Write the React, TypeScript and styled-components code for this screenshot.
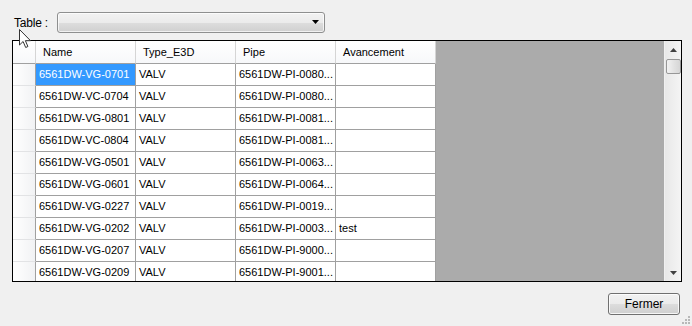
import styled, { createGlobalStyle } from "styled-components";

const GlobalStyle = createGlobalStyle`
  html, body {
    margin: 0;
    padding: 0;
    background: #f0f0f0;
  }
  * {
    box-sizing: border-box;
  }
`;

const Window = styled.div`
  position: relative;
  width: 692px;
  height: 326px;
  background: #f0f0f0;
  font-family: "Liberation Sans", Arial, sans-serif;
  font-size: 11px;
  color: #000;
  overflow: hidden;
`;

const TopBar = styled.div`
  display: flex;
  align-items: center;
  height: 21px;
  margin: 12px 0 0 14px;
`;

const Label = styled.span`
  width: 43px;
  font-size: 12px;
  letter-spacing: -0.2px;
  padding-top: 1px;
`;

const Combo = styled.div`
  display: flex;
  align-items: center;
  justify-content: flex-end;
  width: 268px;
  height: 21px;
  border: 1px solid #8e8f8f;
  border-radius: 3px;
  background: linear-gradient(#f2f2f2 0%, #ebebeb 50%, #dddddd 51%, #cfcfcf 100%);
  box-shadow: inset 0 0 0 1px rgba(255, 255, 255, 0.7);
  padding-right: 4px;
`;

const GridFrame = styled.div`
  display: flex;
  width: 670px;
  height: 242px;
  margin: 7px 0 0 12px;
  border: 1px solid #000;
  background: #ababab;
`;

const GridBody = styled.div`
  flex: 1;
  overflow: hidden;
`;

const Table = styled.div`
  display: grid;
  grid-template-columns: 23px 100px 100px 100px 100px;
  width: 423px;
  background: #fff;
`;

const HeadCorner = styled.div`
  height: 23px;
  background: linear-gradient(#ffffff, #f7f8fa);
  border-right: 1px solid #d5d5d5;
  border-bottom: 1px solid #a0a0a0;
`;

const HeadCell = styled.div`
  height: 23px;
  line-height: 22px;
  padding-left: 7px;
  background: linear-gradient(#ffffff, #f7f8fa);
  border-right: 1px solid #d5d5d5;
  border-bottom: 1px solid #a0a0a0;
  white-space: nowrap;
`;

const RowHead = styled.div`
  height: 22px;
  background: linear-gradient(90deg, #ffffff, #f1f2f4);
  border-right: 1px solid #a0a0a0;
  border-bottom: 1px solid #e2e3e5;
`;

const Cell = styled.div<{ $selected?: boolean }>`
  height: 22px;
  line-height: 21px;
  padding-left: 3px;
  border-right: 1px solid #a0a0a0;
  border-bottom: 1px solid #a0a0a0;
  white-space: nowrap;
  overflow: hidden;
  background: ${p => (p.$selected ? "#3399ff" : "#fff")};
  color: ${p => (p.$selected ? "#fff" : "#000")};
`;

const ScrollBar = styled.div`
  display: flex;
  flex-direction: column;
  align-items: center;
  width: 17px;
  background: linear-gradient(90deg, #e8e8e8, #f4f4f4);
  border-left: 1px solid #f0f0f0;
`;

const ScrollArrow = styled.div`
  display: flex;
  align-items: center;
  justify-content: center;
  width: 17px;
  height: 17px;
`;

const Thumb = styled.div`
  width: 15px;
  height: 15px;
  margin-top: 1px;
  border: 1px solid #979797;
  border-radius: 2px;
  background: linear-gradient(90deg, #f2f2f2, #e0e0e0 60%, #d6d6d6);
`;

const Track = styled.div`
  flex: 1;
`;

const Footer = styled.div`
  display: flex;
  justify-content: flex-end;
  margin: 11px 12px 0 0;
`;

const Button = styled.button`
  width: 72px;
  height: 22px;
  font-family: "Liberation Sans", Arial, sans-serif;
  font-size: 12px;
  color: #000;
  border: 1px solid #707070;
  border-radius: 3px;
  background: linear-gradient(#f2f2f2 0%, #ebebeb 50%, #dddddd 51%, #cfcfcf 100%);
  box-shadow: inset 0 0 0 1px rgba(255, 255, 255, 0.8);
  padding: 0;
`;

const Grip = styled.svg`
  position: absolute;
  right: 1px;
  bottom: 1px;
`;

const Pointer = styled.svg`
  position: absolute;
  left: 19px;
  top: 29px;
`;

const rows: [string, string, string, string][] = [
  ["6561DW-VG-0701", "VALV", "6561DW-PI-0080...", ""],
  ["6561DW-VC-0704", "VALV", "6561DW-PI-0080...", ""],
  ["6561DW-VG-0801", "VALV", "6561DW-PI-0081...", ""],
  ["6561DW-VC-0804", "VALV", "6561DW-PI-0081...", ""],
  ["6561DW-VG-0501", "VALV", "6561DW-PI-0063...", ""],
  ["6561DW-VG-0601", "VALV", "6561DW-PI-0064...", ""],
  ["6561DW-VG-0227", "VALV", "6561DW-PI-0019...", ""],
  ["6561DW-VG-0202", "VALV", "6561DW-PI-0003...", "test"],
  ["6561DW-VG-0207", "VALV", "6561DW-PI-9000...", ""],
  ["6561DW-VG-0209", "VALV", "6561DW-PI-9001...", ""],
];

const columns = ["Name", "Type_E3D", "Pipe", "Avancement"];

export default function App() {
  return (
    <>
      <GlobalStyle />
      <Window>
        <TopBar>
          <Label>Table :</Label>
          <Combo>
            <svg width="8" height="5" viewBox="0 0 8 5">
              <path d="M0 0h7L3.5 4z" fill="#000" />
            </svg>
          </Combo>
        </TopBar>

        <GridFrame>
          <GridBody>
            <Table>
              <HeadCorner />
              {columns.map(c => (
                <HeadCell key={c}>{c}</HeadCell>
              ))}
              {rows.map((r, i) => [
                <RowHead key={"h" + i} />,
                ...r.map((v, j) => (
                  <Cell key={i + "-" + j} $selected={i === 0 && j === 0}>
                    {v}
                  </Cell>
                )),
              ])}
            </Table>
          </GridBody>
          <ScrollBar>
            <ScrollArrow>
              <svg width="7" height="4" viewBox="0 0 7 4">
                <path d="M3.5 0L7 4H0z" fill="#404040" />
              </svg>
            </ScrollArrow>
            <Thumb />
            <Track />
            <ScrollArrow>
              <svg width="7" height="4" viewBox="0 0 7 4">
                <path d="M0 0h7L3.5 4z" fill="#404040" />
              </svg>
            </ScrollArrow>
          </ScrollBar>
        </GridFrame>

        <Footer>
          <Button>Fermer</Button>
        </Footer>

        <Grip width="11" height="11" viewBox="0 0 11 11">
          {[
            [8, 2],
            [8, 5],
            [5, 5],
            [8, 8],
            [5, 8],
            [2, 8],
          ].map(([x, y]) => (
            <rect key={x + "-" + y} x={x} y={y} width="2" height="2" fill="#b8b8b8" />
          ))}
        </Grip>

        <Pointer width="13" height="20" viewBox="0 0 13 20">
          <path
            d="M0.5 0.5v15.5l3.6-3.5 2.6 6 2.2-1-2.5-5.8h5.1z"
            fill="#fff"
            stroke="#333"
            strokeWidth="1"
            strokeLinejoin="round"
          />
        </Pointer>
      </Window>
    </>
  );
}
